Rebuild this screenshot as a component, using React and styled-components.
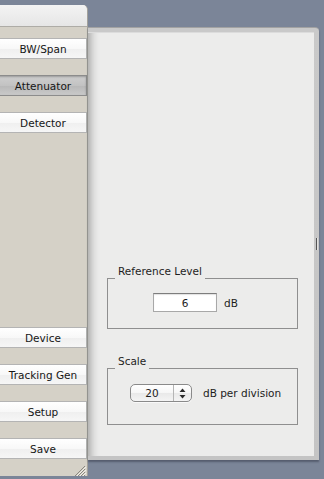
import React from "react";
import styled, { createGlobalStyle } from "styled-components";

const GlobalStyle = createGlobalStyle`
  html, body {
    margin: 0;
    padding: 0;
    background: #7b8598;
    overflow: hidden;
  }
  body {
    font-family: "DejaVu Sans", "Liberation Sans", sans-serif;
    font-size: 10px;
    color: #1c1c1c;
  }
`;

const topButtons = ["BW/Span", "Attenuator", "Detector"];
const bottomButtons = ["Device", "Tracking Gen", "Setup", "Save"];

const App = () => {
  return (
    <>
      <GlobalStyle />
      <Screen>
        <Drawer>
          <DrawerHead />
          {topButtons.map((label) => (
            <Slot key={label}>
              <TabButton $active={label === "Attenuator"}>{label}</TabButton>
            </Slot>
          ))}
          <Spacer />
          {bottomButtons.map((label) => (
            <Slot key={label}>
              <TabButton>{label}</TabButton>
            </Slot>
          ))}
          <Footer>
            <svg width="12" height="11" viewBox="0 0 12 11">
              <path d="M11 1 L1 11 M11 4 L4 11 M11 7 L7 11 M11 10 L10 11" stroke="#8a877f" strokeWidth="1" />
              <path d="M12 2 L2 12 M12 5 L5 12 M12 8 L8 12" stroke="#f2f0ea" strokeWidth="1" />
            </svg>
          </Footer>
        </Drawer>
        <Panel>
          <PanelInner>
            <Group>
              <Caption>Reference Level</Caption>
              <GroupBox $pad="14px 0 16px 45px">
                <Field>6</Field>
                <Unit>dB</Unit>
              </GroupBox>
            </Group>
            <Group $gap="26px">
              <Caption>Scale</Caption>
              <GroupBox $pad="15px 0 22px 22px">
                <Popup>
                  <PopupValue>20</PopupValue>
                  <PopupArrows>
                    <svg width="7" height="11" viewBox="0 0 7 11">
                      <path d="M3.5 0.5 L6.5 4 L0.5 4 Z" fill="#2a2a2a" />
                      <path d="M0.5 7 L6.5 7 L3.5 10.5 Z" fill="#2a2a2a" />
                    </svg>
                  </PopupArrows>
                </Popup>
                <Unit $gap="11px">dB per division</Unit>
              </GroupBox>
            </Group>
          </PanelInner>
          <SideRail>
            <Grip />
          </SideRail>
        </Panel>
      </Screen>
    </>
  );
};

const Screen = styled.div`
  width: 324px;
  height: 479px;
  display: flex;
  align-items: flex-start;
`;

const Drawer = styled.div`
  width: 88px;
  height: 471px;
  margin-top: 5px;
  box-sizing: border-box;
  display: flex;
  flex-direction: column;
  background: #d5d1c7;
  border-right: 1px solid #a3a19b;
  border-top-right-radius: 5px;
  overflow: hidden;
  flex-shrink: 0;
`;

const DrawerHead = styled.div`
  height: 21px;
  flex-shrink: 0;
  background: linear-gradient(#f3f3f3, #e6e6e6);
  border-bottom: 1px solid #aeaca6;
`;

const Slot = styled.div`
  height: 37px;
  flex-shrink: 0;
  box-sizing: border-box;
  padding-top: 11px;
`;

const TabButton = styled.div`
  height: 21px;
  margin-left: -2px;
  box-sizing: border-box;
  display: flex;
  align-items: center;
  justify-content: center;
  padding-left: 2px;
  font-size: 10.5px;
  color: #161616;
  border: 1px solid ${(p) => (p.$active ? "#8c8c8c" : "#b4b4b4")};
  border-left: none;
  background: ${(p) =>
    p.$active
      ? "linear-gradient(#cfcfcf 0%, #c2c2c2 50%, #b8b8b8 51%, #c9c9c9 100%)"
      : "linear-gradient(#ffffff 0%, #f8f8f8 50%, #efefef 51%, #f6f6f6 100%)"};
  box-shadow: ${(p) => (p.$active ? "inset 0 1px 2px rgba(0,0,0,0.25)" : "none")};
`;

const Spacer = styled.div`
  flex: 1;
`;

const Footer = styled.div`
  height: 12px;
  flex-shrink: 0;
  display: flex;
  justify-content: flex-end;
  align-items: flex-end;
  padding-right: 1px;
`;

const Panel = styled.div`
  width: 231px;
  height: 433px;
  margin-top: 27px;
  box-sizing: border-box;
  display: flex;
  padding-top: 4px;
  padding-bottom: 4px;
  background: linear-gradient(#c9c9c9, #c4c4c4);
  border-top: 1px solid #a2a2a2;
  border-top-right-radius: 4px;
  box-shadow: 0 2px 2px rgba(40, 45, 60, 0.45);
`;

const PanelInner = styled.div`
  flex: 1;
  display: flex;
  flex-direction: column;
  justify-content: flex-end;
  padding: 0 16px 31px 19px;
  background: #ececeb;
  border-top: 1px solid #dcdcdc;
  box-shadow: inset 12px 0 10px -10px rgba(0, 0, 0, 0.35);
`;

const SideRail = styled.div`
  width: 5px;
  display: flex;
  align-items: center;
  justify-content: center;
`;

const Grip = styled.div`
  width: 1px;
  height: 12px;
  background: #555;
  border-right: 1px solid #e0e0e0;
`;

const Group = styled.div`
  display: flex;
  flex-direction: column;
  margin-top: ${(p) => p.$gap || "0"};
`;

const Caption = styled.div`
  align-self: flex-start;
  position: relative;
  z-index: 1;
  height: 14px;
  line-height: 13px;
  margin: 0 0 -1px 8px;
  padding: 0 3px;
  background: #ececeb;
  font-size: 10.5px;
  color: #1e1e1e;
`;

const GroupBox = styled.div`
  display: flex;
  align-items: center;
  border: 1px solid #8f8f8f;
  padding: ${(p) => p.$pad};
`;

const Field = styled.div`
  width: 64px;
  height: 19px;
  box-sizing: border-box;
  background: #fff;
  border: 1px solid #a8a8a8;
  border-top-color: #7d7d7d;
  box-shadow: inset 0 1px 1px rgba(0, 0, 0, 0.12);
  display: flex;
  align-items: center;
  justify-content: center;
  font-size: 10.5px;
`;

const Unit = styled.span`
  margin-left: ${(p) => p.$gap || "7px"};
  font-size: 10.5px;
`;

const Popup = styled.div`
  width: 62px;
  height: 18px;
  box-sizing: border-box;
  display: flex;
  border: 1px solid #8a8a8a;
  border-radius: 5px;
  background: linear-gradient(#ffffff 0%, #f6f6f6 50%, #e9e9e9 51%, #f4f4f4 100%);
  box-shadow: 0 1px 0 rgba(255, 255, 255, 0.7);
`;

const PopupValue = styled.div`
  flex: 1;
  display: flex;
  align-items: center;
  justify-content: center;
  font-size: 10.5px;
  border-right: 1px solid #b5b5b5;
`;

const PopupArrows = styled.div`
  width: 17px;
  display: flex;
  align-items: center;
  justify-content: center;
`;

export default App;
